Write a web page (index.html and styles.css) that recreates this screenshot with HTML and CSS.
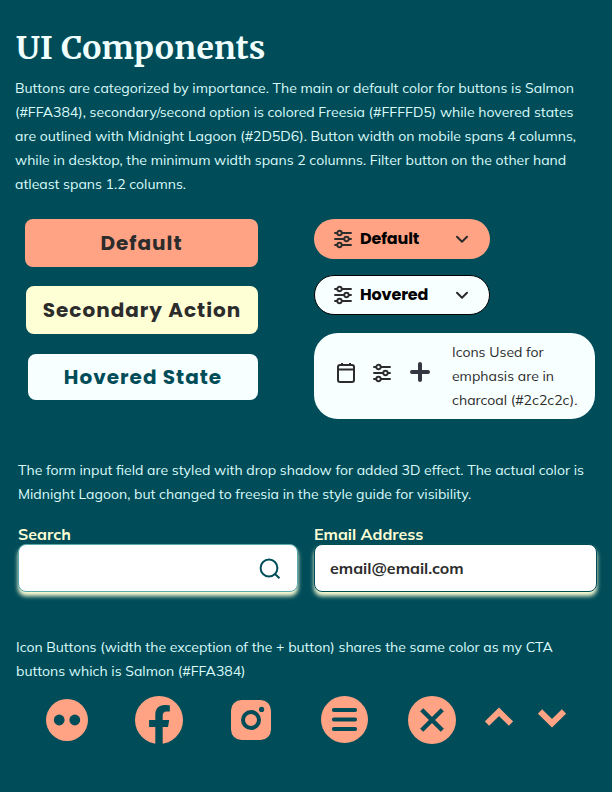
FILE: index.html
```
<!DOCTYPE html>
<html lang="en">
<head>
<meta charset="utf-8">
<title>UI Components</title>
<link rel="stylesheet" href="styles.css">
</head>
<body>
<svg width="0" height="0" class="defs">
  <symbol id="sliders" viewBox="0 0 20 20">
    <g fill="none" stroke="#2c2c2c" stroke-width="1.9" stroke-linecap="round">
      <path d="M2 4H4M9 4H18M2 10H11M16 10H18M2 16H4M9 16H18"/>
      <circle cx="6.5" cy="4" r="2.2"/><circle cx="13.5" cy="10" r="2.2"/><circle cx="6.5" cy="16" r="2.2"/>
    </g>
  </symbol>
  <symbol id="chev" viewBox="0 0 14 10">
    <path d="M2 2.8L7 7.8L12 2.8" fill="none" stroke="#2c2c2c" stroke-width="2" stroke-linecap="round" stroke-linejoin="round"/>
  </symbol>
</svg>
<main class="page">
  <h1 class="title">UI Components</h1>
  <p class="text intro">Buttons are categorized by importance. The main or default color for buttons is Salmon<br>(#FFA384), secondary/second option is colored Freesia (#FFFFD5) while hovered states<br>are outlined with Midnight Lagoon (#2D5D6). Button width on mobile spans 4 columns,<br>while in desktop, the minimum width spans 2 columns. Filter button on the other hand<br>atleast spans 1.2 columns.</p>

  <section class="samples">
    <div class="buttons">
      <button class="btn primary">Default</button>
      <button class="btn secondary">Secondary Action</button>
      <button class="btn hovered">Hovered State</button>
    </div>
    <div class="filters">
      <button class="pill"><svg class="ic20"><use href="#sliders"/></svg><span>Default</span><svg class="chev"><use href="#chev"/></svg></button>
      <button class="pill pill-hover"><svg class="ic20"><use href="#sliders"/></svg><span>Hovered</span><svg class="chev"><use href="#chev"/></svg></button>
      <div class="card">
        <svg class="calendar" viewBox="0 0 20 22"><path d="M6 1V4M14 1V4M2 7.6H18" fill="none" stroke="#2c2c2c" stroke-width="2"/><rect x="2" y="3" width="16" height="17" rx="2" fill="none" stroke="#2c2c2c" stroke-width="2"/></svg>
        <svg class="ic20 gap16"><use href="#sliders"/></svg>
        <svg class="plus" viewBox="0 0 20 20"><path d="M10 2V18M2 10H18" stroke="#343741" stroke-width="4" stroke-linecap="round"/></svg>
        <p class="note">Icons Used for<br>emphasis are in<br>charcoal (#2c2c2c).</p>
      </div>
    </div>
  </section>

  <p class="text form-text">The form input field are styled with drop shadow for added 3D effect. The actual color is<br>Midnight Lagoon, but changed to freesia in the style guide for visibility.</p>

  <section class="fields">
    <div class="field search">
      <div class="label">Search</div>
      <div class="input"><svg class="lens" viewBox="0 0 22 22"><circle cx="10" cy="10" r="8.4" fill="none" stroke="#004d59" stroke-width="2"/><path d="M16 16L20.5 20.2" stroke="#004d59" stroke-width="2"/></svg></div>
    </div>
    <div class="field email">
      <div class="label">Email Address</div>
      <div class="input">email@email.com</div>
    </div>
  </section>

  <p class="text icon-text">Icon Buttons (width the exception of the + button) shares the same color as my CTA<br>buttons which is Salmon (#FFA384)</p>

  <section class="icons">
    <svg class="flickr" viewBox="0 0 42 42"><circle cx="21" cy="21" r="21" fill="#ffa384"/><circle cx="13.2" cy="21" r="5.4" fill="#004d59"/><circle cx="28.8" cy="21" r="5.4" fill="#004d59"/></svg>
    <svg class="facebook" viewBox="0 0 48 48"><circle cx="24" cy="24" r="24" fill="#ffa384"/><path d="M20.3 48V31H14.1V24H20.3V18.7C20.3 12.5 24 9.1 29.7 9.1C32.2 9.1 34.8 9.5 34.8 9.5V15.6H31.7C28.7 15.6 27.7 17.4 27.7 19.5V24H34.2L33 31H27.7V48Z" fill="#004d59"/></svg>
    <svg class="insta" viewBox="0 0 40 40"><rect width="40" height="40" rx="10.5" fill="#ffa384"/><circle cx="20" cy="20" r="8" fill="none" stroke="#004d59" stroke-width="4"/><circle cx="30.6" cy="9.4" r="2.6" fill="#004d59"/></svg>
    <svg class="menu" viewBox="0 0 47 47"><circle cx="23.5" cy="23.5" r="23.5" fill="#ffa384"/><path d="M12.9 14H34.1M12.9 23.5H34.1M12.9 33H34.1" stroke="#004d59" stroke-width="4" stroke-linecap="round"/></svg>
    <svg class="close" viewBox="0 0 48 48"><circle cx="24" cy="24" r="24" fill="#ffa384"/><path d="M13.7 13.7L34.3 34.3M34.3 13.7L13.7 34.3" stroke="#004d59" stroke-width="4.4"/></svg>
    <svg class="up" viewBox="0 0 28 20"><path d="M2 16.6L14 4.8L26 16.6" fill="none" stroke="#ffa384" stroke-width="6"/></svg>
    <svg class="down" viewBox="0 0 28 20"><path d="M2 3.4L14 15.2L26 3.4" fill="none" stroke="#ffa384" stroke-width="6"/></svg>
  </section>
</main>
</body>
</html>
```
FILE: styles.css
```
* { box-sizing: border-box; margin: 0; padding: 0; }
body { background: #004d59; font-family: Mulish, Nunito, Lato, sans-serif; }
svg { display: block; flex: none; }
.defs { display: none; }
.page { width: 612px; height: 792px; overflow: hidden; padding-top: 28px; }
.title { margin-left: 16px; height: 40px; font: 700 32px/40px Merriweather, "DejaVu Serif Condensed", serif; letter-spacing: 0.33px; color: #f0fffe; white-space: nowrap; }
.text { font-size: 14px; line-height: 24px; color: #dcfbfb; white-space: nowrap; }
.intro { margin: 8px 0 0 15px; }

.samples { display: flex; margin-top: 23px; height: 200px; }
.buttons { width: 314px; padding-right: 56px; display: flex; flex-direction: column; align-items: flex-end; }
.btn { border: 0; border-radius: 8px; height: 48px; font: 700 20px/48px Poppins, Inter, sans-serif; letter-spacing: 1px; color: #2c2c2c; }
.primary { width: 233px; background: #ffa384; }
.secondary { width: 232px; margin-top: 19px; background: #ffffd5; }
.hovered { width: 230px; height: 46px; margin-top: 20px; line-height: 46px; background: #f8ffff; color: #004d59; }

.filters { width: 281px; }
.pill { display: flex; align-items: center; width: 176px; height: 40px; padding: 0 21px 0 19px; border: 0; border-radius: 20px; background: #ffa384; font: 700 16px/40px Poppins, Inter, sans-serif; letter-spacing: -0.15px; color: #000; }
.pill span { margin-left: 7px; flex: 1; text-align: left; }
.pill-hover { margin-top: 16px; padding: 0 20px 0 18px; border: 1px solid #000; background: #f8ffff; line-height: 38px; }
.ic20 { width: 20px; height: 20px; }
.calendar { width: 20px; height: 22px; }
.chev { width: 14px; height: 10px; }
.card { display: flex; align-items: center; height: 86px; margin-top: 18px; padding: 0 0 6px 22px; border-radius: 24px; background: #f8ffff; }
.gap16 { margin-left: 16px; }
.plus { width: 20px; height: 20px; margin: -2px 0 0 18px; }
.note { margin: 6px 0 0 22px; font-size: 14px; line-height: 24px; color: #2c2c2c; white-space: nowrap; }

.form-text { margin: 39px 0 0 18px; }
.fields { display: flex; margin: 18px 0 0 18px; }
.search { width: 280px; }
.email { width: 283px; margin-left: 16px; }
.label { height: 20px; font-size: 16px; font-weight: 700; line-height: 20px; color: #ffffd5; white-space: nowrap; }
.input { display: flex; align-items: center; height: 48px; border: 1px solid #5aa9ae; border-radius: 8px; background: #fff; box-shadow: 0 4px 4px #ffffd5; font-size: 16px; font-weight: 700; color: #2c2c2c; }
.search .input { justify-content: flex-end; padding-right: 16px; }
.email .input { padding-left: 15px; border-color: #004d59; }
.lens { width: 22px; height: 22px; margin-top: 1px; }

.icon-text { margin: 43px 0 0 16px; }
.icons { display: flex; align-items: center; margin: 13px 0 0 46px; height: 48px; }
.flickr { width: 42px; height: 42px; }
.facebook { width: 48px; height: 48px; margin-left: 47px; }
.insta { width: 40px; height: 40px; margin-left: 48px; }
.menu { width: 47px; height: 47px; margin-left: 50px; align-self: flex-start; }
.close { width: 48px; height: 48px; margin-left: 40px; }
.up { width: 28px; height: 20px; margin: -6px 0 0 29px; }
.down { width: 28px; height: 20px; margin: -4px 0 0 25px; }
```
